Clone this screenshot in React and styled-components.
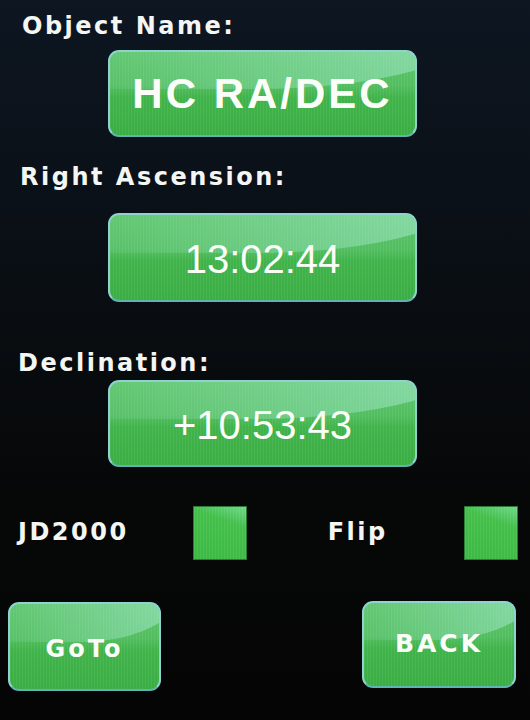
import React from "react";
import styled, { createGlobalStyle } from "styled-components";

const GlobalStyle = createGlobalStyle`
  html, body {
    margin: 0;
    padding: 0;
    background: #070809;
  }
`;

const Screen = styled.div`
  width: 530px;
  height: 720px;
  box-sizing: border-box;
  padding-top: 15px;
  display: flex;
  flex-direction: column;
  background: linear-gradient(180deg, #0d1621 0%, #0a0f15 35%, #060707 70%, #050505 100%);
  font-family: "DejaVu Sans", "Liberation Sans", sans-serif;
  color: #ffffff;
  overflow: hidden;
`;

const Label = styled.div`
  margin-top: ${(p) => p.$top || 0}px;
  margin-left: ${(p) => p.$left || 20}px;
  font-size: 24px;
  line-height: 23px;
  font-weight: bold;
  letter-spacing: 2.5px;
  color: #f4f6f4;
`;

const GlossButton = styled.div`
  position: relative;
  box-sizing: border-box;
  width: ${(p) => p.$w}px;
  height: ${(p) => p.$h}px;
  margin-top: ${(p) => p.$top || 0}px;
  margin-left: ${(p) => p.$left || 0}px;
  border-radius: 11px;
  border: 2px solid #8fd3cf;
  border-bottom-color: #5fb3b0;
  background:
    repeating-linear-gradient(90deg, rgba(255, 255, 255, 0.07) 0 1px, transparent 1px 3px),
    linear-gradient(180deg, #5cc46a 0%, #52be60 40%, #40b34a 55%, #3aad43 100%);
  display: flex;
  align-items: center;
  justify-content: center;
  overflow: hidden;
  color: #ffffff;

  &::before {
    content: "";
    position: absolute;
    left: 0;
    right: -20%;
    top: -60%;
    height: 105%;
    border-radius: 0 0 60% 0 / 0 0 70% 0;
    background: linear-gradient(90deg, rgba(140, 220, 170, 0.12) 0%, rgba(175, 238, 220, 0.55) 100%);
    pointer-events: none;
  }
`;

const ButtonText = styled.span`
  position: relative;
  font-family: ${(p) => (p.$label ? '"DejaVu Sans", sans-serif' : '"Liberation Sans", Arial, sans-serif')};
  font-size: ${(p) => p.$size}px;
  font-weight: ${(p) => (p.$thin ? "normal" : "bold")};
  letter-spacing: ${(p) => p.$spacing || 0}px;
  line-height: 1;
  margin-top: ${(p) => p.$offset || 0}px;
  color: #fbfdf8;
`;

const OptionRow = styled.div`
  display: flex;
  align-items: center;
  margin-top: 39px;
  height: 53px;
`;

const Check = styled.div`
  position: relative;
  box-sizing: border-box;
  width: 54px;
  height: 54px;
  margin-left: ${(p) => p.$left}px;
  border: 1px solid #2a7a34;
  background:
    repeating-linear-gradient(90deg, rgba(255, 255, 255, 0.08) 0 1px, transparent 1px 3px),
    linear-gradient(200deg, #6fd88a 0%, #43bf4a 30%, #3cb944 100%);
`;

const BottomRow = styled.div`
  display: flex;
  justify-content: space-between;
  align-items: flex-start;
  margin-top: 43px;
  padding: 0 14px 0 8px;
`;

export default function App() {
  return (
    <>
      <GlobalStyle />
      <Screen>
        <Label $left={22}>Object Name:</Label>
        <GlossButton $w={309} $h={87} $top={12} $left={108}>
          <ButtonText $size={42} $spacing={3}>HC RA/DEC</ButtonText>
        </GlossButton>

        <Label $top={29}>Right Ascension:</Label>
        <GlossButton $w={309} $h={89} $top={24} $left={108}>
          <ButtonText $thin $size={40} $offset={2}>13:02:44</ButtonText>
        </GlossButton>

        <Label $top={50} $left={18}>Declination:</Label>
        <GlossButton $w={309} $h={87} $top={5} $left={108}>
          <ButtonText $thin $size={40} $offset={2}>+10:53:43</ButtonText>
        </GlossButton>

        <OptionRow>
          <Label $left={18}>JD2000</Label>
          <Check $left={64} />
          <Label $left={81}>Flip</Label>
          <Check $left={76} />
        </OptionRow>

        <BottomRow>
          <GlossButton $w={153} $h={89}>
            <ButtonText $label $size={24} $spacing={3} $offset={4}>GoTo</ButtonText>
          </GlossButton>
          <GlossButton $w={154} $h={87} $top={-1}>
            <ButtonText $label $size={25} $spacing={3} $offset={-2}>BACK</ButtonText>
          </GlossButton>
        </BottomRow>
      </Screen>
    </>
  );
}
